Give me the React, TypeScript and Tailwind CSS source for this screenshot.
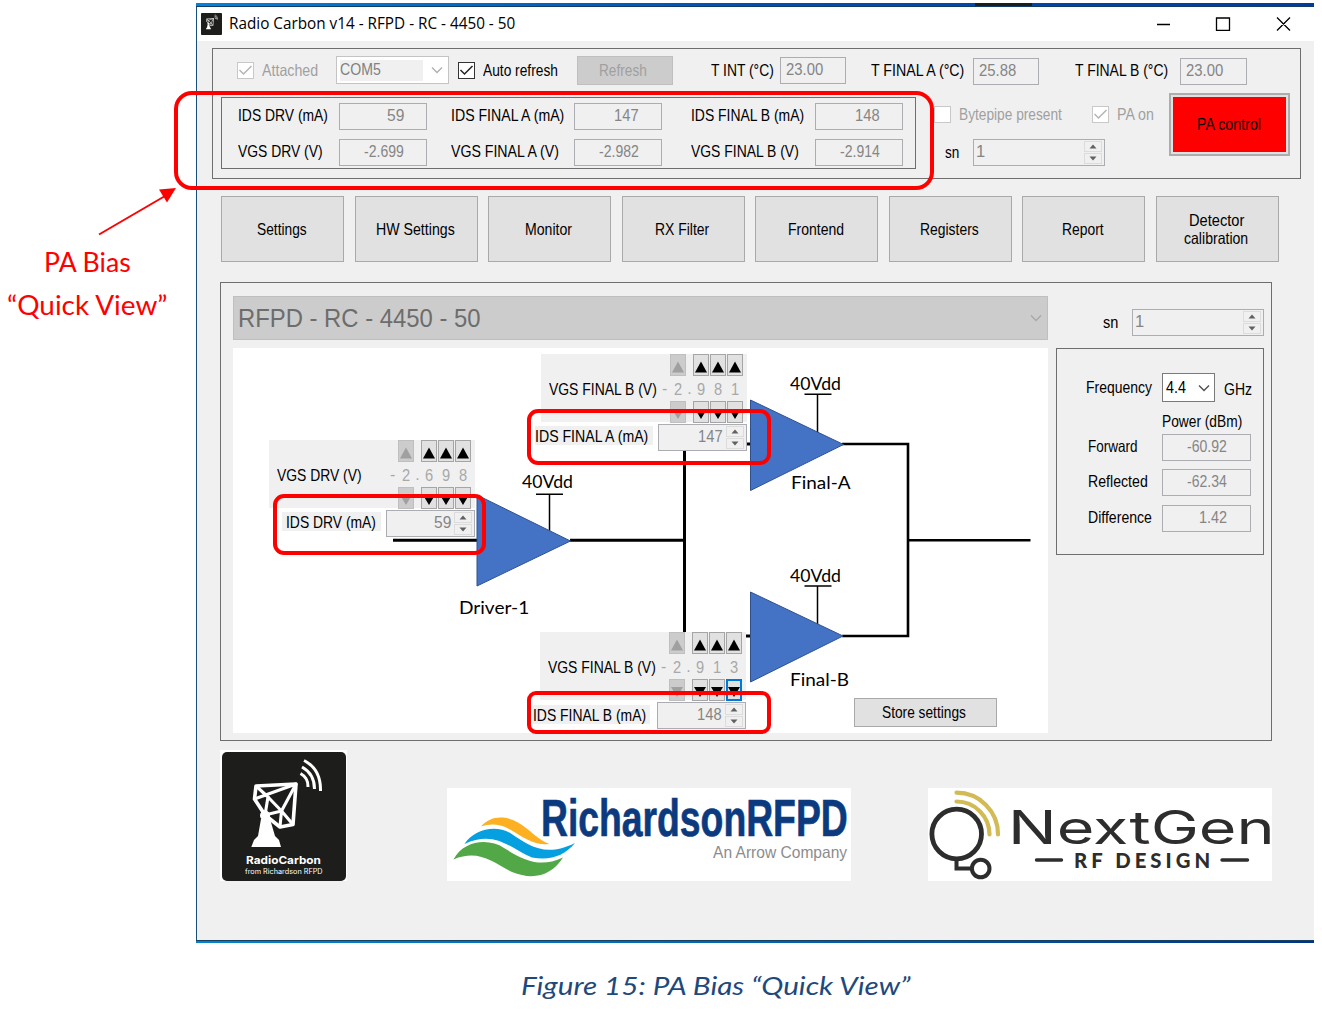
import { useLayoutEffect, useRef } from "react";
import type { ReactNode } from "react";

/* Text condensed or stretched horizontally to fill the width given by its class. */
function Fit({ className = "", children }: { className?: string; children: ReactNode }) {
  const outer = useRef<HTMLSpanElement>(null);
  const inner = useRef<HTMLSpanElement>(null);
  useLayoutEffect(() => {
    const o = outer.current;
    const i = inner.current;
    if (o && i && i.offsetWidth > 0) {
      i.style.transform = `scaleX(${o.clientWidth / i.offsetWidth})`;
    }
  }, []);
  return (
    <span ref={outer} className={"block shrink-0 leading-none whitespace-nowrap " + className}>
      <span ref={inner} className="inline-block origin-left align-top">{children}</span>
    </span>
  );
}

function Check({ checked, disabled, className = "" }: { checked?: boolean; disabled?: boolean; className?: string }) {
  return (
    <span className={"flex size-[17px] shrink-0 items-center justify-center border bg-white " + (disabled ? "border-[#c8c8c8] text-[#b4b4b4] " : "border-[#333] text-[#222] ") + className}>
      {checked && (
        <svg viewBox="0 0 15 15" className="size-[15px]" fill="none" stroke="currentColor" strokeWidth="1.5">
          <path d="M1.5 7 L5.5 11 L13.5 3" />
        </svg>
      )}
    </span>
  );
}

function Value({ box, text, children }: { box: string; text: string; children: ReactNode }) {
  return (
    <div className={"flex shrink-0 border border-[#abadb3] bg-[#f0f0f0] pt-[3px] text-[16.5px] text-[#858585] " + box}>
      <Fit className={text}>{children}</Fit>
    </div>
  );
}

function Arrows() {
  return (
    <div className="flex h-[23px] w-[18px] shrink-0 flex-col gap-[1px]">
      <div className="flex flex-1 items-center justify-center border border-[#dcdcdc]">
        <svg viewBox="0 0 8 5" className="h-[5px] w-[8px]" fill="#606060"><path d="M0.5 4.5 L4 0.5 L7.5 4.5Z" /></svg>
      </div>
      <div className="flex flex-1 items-center justify-center border border-[#dcdcdc]">
        <svg viewBox="0 0 8 5" className="h-[5px] w-[8px]" fill="#606060"><path d="M0.5 0.5 L4 4.5 L7.5 0.5Z" /></svg>
      </div>
    </div>
  );
}

function SnSpinner() {
  return (
    <div className="flex h-[27px] w-[132px] shrink-0 justify-between border border-[#abadb3] pt-[1px] pr-[2px] pl-[2px] text-[16.5px] text-[#858585]">
      <span className="mt-[2px] leading-none">1</span>
      <Arrows />
    </div>
  );
}

function Chevron({ className }: { className: string }) {
  return (
    <svg viewBox="0 0 12 8" className={"h-[8px] w-[12px] shrink-0 " + className} fill="none" stroke="currentColor" strokeWidth="1.4">
      <path d="M1 1.5 L6 6.5 L11 1.5" />
    </svg>
  );
}

function NavButton({ children }: { children: ReactNode }) {
  return (
    <button className="flex h-[66px] w-[123px] flex-col items-center justify-center gap-[1px] border border-[#a9a9a9] bg-[#e1e1e1] pr-[2px] text-[16.5px]">
      {children}
    </button>
  );
}

function StepButton({ dir, state }: { dir: "up" | "down"; state: "off" | "on" | "focus" }) {
  const look =
    state === "off"
      ? "w-[16px] border border-[#bfbfbf] bg-[#cccccc] text-[#a0a0a0]"
      : state === "focus"
        ? "w-[16px] border-2 border-[#0078d7] bg-[#e1e1e1] text-black"
        : "w-[16px] border border-[#a5a5a5] bg-[#e1e1e1] text-black";
  return (
    <div className={"flex h-[22px] items-center justify-center overflow-hidden " + look}>
      <svg viewBox="0 0 12 12" className="mt-[3px] h-[12px] w-[12px] shrink-0" fill="currentColor">
        {dir === "up" ? <path d="M0 11.5 L6 0.5 L12 11.5Z" /> : <path d="M0 1 L12 1 L6 11Z" />}
      </svg>
    </div>
  );
}

function Digit({ value, state, down }: { value: string; state: "off" | "on"; down?: "focus" }) {
  return (
    <div className="flex h-[69px] w-[16px] flex-col items-center justify-between">
      <StepButton dir="up" state={state} />
      <Fit className="mt-[2px] w-[8px] text-[16.5px] text-[#a8a8a8]">{value}</Fit>
      <StepButton dir="down" state={down ?? state} />
    </div>
  );
}

function Adjuster({ label, labelWidth, digits, place, focusLast }: { label: string; labelWidth: string; digits: string[]; place: string; focusLast?: boolean }) {
  return (
    <div className={"absolute flex h-[68px] w-[206px] bg-[#f0f0f0] " + place}>
      <div className="flex w-[119px] items-center pt-[3px] pl-[8px] text-[16.5px]">
        <Fit className={labelWidth}>{label}</Fit>
      </div>
      <div className="flex w-[10px] items-center pt-[2px] pl-[2px] text-[16px] text-[#a8a8a8]">-</div>
      <Digit value={digits[0]} state="off" />
      <div className="flex w-[7px] items-center justify-center pt-[2px] text-[16px] text-[#a8a8a8]">.</div>
      <div className="flex gap-[1px]">
        <Digit value={digits[1]} state="on" />
        <Digit value={digits[2]} state="on" />
        <Digit value={digits[3]} state="on" down={focusLast ? "focus" : undefined} />
      </div>
    </div>
  );
}

function IdsSpinner({ place, text, value }: { place: string; text: string; value: string }) {
  return (
    <div className={"absolute flex h-[27px] w-[89px] justify-end gap-[3px] border border-[#abadb3] bg-[#f0f0f0] pt-[1px] pr-[2px] text-[16.5px] text-[#858585] " + place}>
      <Fit className={"mt-[2px] " + text}>{value}</Fit>
      <Arrows />
    </div>
  );
}

function Dish({ className }: { className: string }) {
  return (
    <svg viewBox="222 752 124 129" className={className}>
      <rect x="222" y="752" width="124" height="129" rx="5" fill="#1d1d1b" />
      <g fill="none" stroke="#fff" strokeWidth="3.6" strokeLinejoin="round">
        <path d="M256 786 L296 784 L293 824.5 L280 827 L265 815 L254.500 799 Z" />
        <path d="M254.500 799 L296 784 L281.5 811 L265 815 L268 797 L256 786" strokeWidth="3.1" />
        <path d="M268 797 L281.5 811 L293 824.5 M281.5 811 L280 826.5" strokeWidth="3.1" />
      </g>
      <g fill="none" stroke="#fff" strokeWidth="3">
        <path d="M300.5 773.5 Q308.500 778 308 787" />
        <path d="M302 767 Q314.500 774 314.500 789" />
        <path d="M304 760.500 Q321 769 320.500 791" />
      </g>
      <circle cx="265" cy="815.5" r="5" fill="#fff" />
      <path d="M261 819 L270 819 L275 836 L279 840 L281 847 L251.300 847 L254 840 L258 836Z" fill="#fff" />
    </svg>
  );
}

const BOX = "border border-[#6e6e6e]";

export default function App() {
  return (
    <div className="relative h-[1013px] w-[1322px] overflow-hidden bg-white font-['Liberation_Sans',sans-serif] text-black">
      <div className="pt-[3px] pl-[196px]">
        {/* Application window */}
        <div className="flex h-[940px] w-[1118px] flex-col">
          <div className="flex h-[4px] shrink-0 border-b border-[#123c66] bg-linear-to-r from-[#0082dc] via-[#0050b4] to-[#003ca0]">
            <div className="ml-[779px] h-[3px] w-[57px] bg-[#1d1d1b]" />
          </div>
          <div className="flex h-[933px] flex-col border-l border-[#195078] bg-[#f0f0f0]">
            <div className="flex h-[34px] shrink-0 items-center bg-white pl-[4px] font-['Open_Sans',sans-serif]">
              <Dish className="h-[22px] w-[21px]" />
              <Fit className="ml-[7px] w-[286px] text-[15.5px]">Radio Carbon v14 - RFPD - RC - 4450 - 50</Fit>
              <svg viewBox="0 0 134 14" className="ml-[642px] h-[14px] w-[134px]" fill="none" stroke="#000" strokeWidth="1.3">
                <path d="M0 7.500 H13 M59.500 1 H72.500 V13.500 H59.500Z M120 0.500 L133 13.500 M133 0.500 L120 13.500" />
              </svg>
            </div>

            {/* Status panel */}
            <div className={"mt-[7px] ml-[15px] h-[131px] w-[1089px] shrink-0 " + BOX}>
              <div className="flex h-[42px] items-center pl-[24px] text-[16.5px]">
                <Check checked disabled />
                <Fit className="ml-[8px] w-[56px] text-[#a0a0a0]">Attached</Fit>
                <div className="ml-[18px] flex h-[28px] w-[113px] items-center justify-between border border-[#c4c4c4] bg-white pr-[5px] pl-[3px]">
                  <div className="flex h-[21px] w-[83px] bg-[#f0f0f0] pt-[1px] text-[#808080]">
                    <Fit className="w-[41px]">COM5</Fit>
                  </div>
                  <Chevron className="text-[#b0b0b0]" />
                </div>
                <Check checked className="ml-[9px]" />
                <Fit className="ml-[8px] w-[75px]">Auto refresh</Fit>
                <div className="ml-[19px] flex h-[29px] w-[96px] items-center justify-center border border-[#bfbfbf] bg-[#cccccc] pr-[4px] text-[#a0a0a0]">
                  <Fit className="w-[48px]">Refresh</Fit>
                </div>
                <Fit className="ml-[38px] w-[63px]">T INT (°C)</Fit>
                <Value box="ml-[6px] h-[27px] w-[66px] pl-[5px]" text="w-[37px]">23.00</Value>
                <Fit className="ml-[25px] w-[93px]">T FINAL A (°C)</Fit>
                <Value box="ml-[9px] mt-[2px] h-[27px] w-[66px] pl-[5px]" text="w-[37px]">25.88</Value>
                <Fit className="ml-[36px] w-[93px]">T FINAL B (°C)</Fit>
                <Value box="ml-[12px] mt-[2px] h-[27px] w-[67px] pl-[5px]" text="w-[37px]">23.00</Value>
              </div>
              <div className="flex pt-[2px] pl-[8px] text-[16.5px]">
                <div className={"mt-[4px] flex h-[72px] w-[695px] shrink-0 flex-col gap-[9px] pt-[5px] pl-[16px] " + BOX}>
                  <div className="flex">
                    <Fit className="mt-[4px] w-[90px]">IDS DRV (mA)</Fit>
                    <Value box="ml-[11px] h-[27px] w-[88px] justify-end pr-[22px]" text="w-[17px]">59</Value>
                    <Fit className="mt-[4px] ml-[24px] w-[113px]">IDS FINAL A (mA)</Fit>
                    <Value box="ml-[10px] h-[27px] w-[88px] justify-end pr-[22px]" text="w-[25px]">147</Value>
                    <Fit className="mt-[4px] ml-[29px] w-[113px]">IDS FINAL B (mA)</Fit>
                    <Value box="ml-[11px] h-[27px] w-[88px] justify-end pr-[22px]" text="w-[25px]">148</Value>
                  </div>
                  <div className="flex">
                    <Fit className="mt-[4px] mr-[5px] w-[85px]">VGS DRV (V)</Fit>
                    <Value box="ml-[11px] h-[27px] w-[88px] justify-end pr-[22px]" text="w-[40px]">-2.699</Value>
                    <Fit className="mt-[4px] mr-[5px] ml-[24px] w-[108px]">VGS FINAL A (V)</Fit>
                    <Value box="ml-[10px] h-[27px] w-[88px] justify-end pr-[22px]" text="w-[40px]">-2.982</Value>
                    <Fit className="mt-[4px] mr-[5px] ml-[29px] w-[108px]">VGS FINAL B (V)</Fit>
                    <Value box="ml-[11px] h-[27px] w-[88px] justify-end pr-[22px]" text="w-[40px]">-2.914</Value>
                  </div>
                </div>
                <div className="ml-[18px] w-[221px] shrink-0 pt-[13px]">
                  <div className="flex items-center text-[#a0a0a0]">
                    <Check disabled />
                    <Fit className="ml-[8px] w-[103px]">Bytepipe present</Fit>
                    <Check checked disabled className="ml-[30px]" />
                    <Fit className="ml-[8px] w-[37px]">PA on</Fit>
                  </div>
                  <div className="mt-[16px] flex items-center pl-[11px]">
                    <Fit className="w-[14px]">sn</Fit>
                    <div className="ml-[14px]"><SnSpinner /></div>
                  </div>
                </div>
                <div className="ml-[14px] h-[63px] w-[121px] border-2 border-[#adadad] bg-[#e1e1e1] p-[2px]">
                  <div className="flex h-full items-center justify-center bg-[#ff0000] pr-[2px]">
                    <Fit className="w-[64px]">PA control</Fit>
                  </div>
                </div>
              </div>
            </div>

            <div className="mt-[17px] ml-[24px] flex shrink-0 gap-[10.5px]">
              <NavButton><Fit className="w-[50px]">Settings</Fit></NavButton>
              <NavButton><Fit className="w-[79px]">HW Settings</Fit></NavButton>
              <NavButton><Fit className="w-[47px]">Monitor</Fit></NavButton>
              <NavButton><Fit className="w-[54px]">RX Filter</Fit></NavButton>
              <NavButton><Fit className="w-[56px]">Frontend</Fit></NavButton>
              <NavButton><Fit className="w-[59px]">Registers</Fit></NavButton>
              <NavButton><Fit className="w-[42px]">Report</Fit></NavButton>
              <NavButton>
                <Fit className="w-[55px]">Detector</Fit>
                <Fit className="w-[64px]">calibration</Fit>
              </NavButton>
            </div>

            {/* Bias panel */}
            <div className={"mt-[20px] ml-[23px] flex h-[459px] w-[1052px] shrink-0 gap-[8px] pt-[13px] pl-[12px] " + BOX}>
              <div className="w-[815px] shrink-0">
                <div className="flex h-[44px] items-center justify-between border border-[#bfbfbf] bg-[#cccccc] pr-[5px] pl-[4px] text-[26.5px] text-[#6d6d6d]">
                  <Fit className="w-[243px]">RFPD - RC - 4450 - 50</Fit>
                  <Chevron className="text-[#a8a8a8]" />
                </div>
                {/* Amplifier chain: a free canvas with controls placed over the schematic */}
                <div className="relative mt-[8px] h-[385px] bg-white text-[16.5px]">
                  <svg viewBox="233 348 815 385" className="absolute inset-0 h-[385px] w-[815px]" fill="none" stroke="#000">
                    <g strokeWidth="3">
                      <path d="M393 540.300 H477 M570 540.300 H685 M684.500 440 V636 M745 444 H751 M745 636 H751" />
                      <path d="M842 444 H908 V636 H842 M908 540.300 H1030.500" strokeWidth="2.600" />
                    </g>
                    <g strokeWidth="1.500">
                      <path d="M536 494.300 H563 M549.500 494 V531 M804.500 394.300 H831.500 M817.500 394 V433 M804.500 586 H831.500 M817.500 586 V625" />
                    </g>
                    <g fill="#4472c4" stroke="#2f528f" strokeWidth="1">
                      <path d="M477 495 V586 L570.500 541Z M750.500 400 V490.500 L843.500 444.500Z M750.500 592 V682 L843 636Z" />
                    </g>
                  </svg>
                  <div className="font-['Lato',sans-serif] text-[18px]">
                    <Fit className="absolute top-[26px] left-[557px] w-[51px]">40Vdd</Fit>
                    <Fit className="absolute top-[124px] left-[289px] w-[51px]">40Vdd</Fit>
                    <Fit className="absolute top-[218px] left-[557px] w-[51px]">40Vdd</Fit>
                    <Fit className="absolute top-[125px] left-[558px] w-[60px]">Final-A</Fit>
                    <Fit className="absolute top-[250px] left-[226px] w-[70px]">Driver-1</Fit>
                    <Fit className="absolute top-[322px] left-[557px] w-[59px]">Final-B</Fit>
                  </div>

                  <Adjuster place="top-[92px] left-[36px]" label="VGS DRV (V)" labelWidth="w-[85px]" digits={["2", "6", "9", "8"]} />
                  <Adjuster place="top-[6px] left-[308px]" label="VGS FINAL B (V)" labelWidth="w-[108px]" digits={["2", "9", "8", "1"]} />
                  <Adjuster place="top-[284px] left-[307px]" label="VGS FINAL B (V)" labelWidth="w-[108px]" digits={["2", "9", "1", "3"]} focusLast />

                  <div className="absolute top-[164px] left-[49px] flex h-[19px] w-[99px] items-center bg-[#f0f0f0] pt-[1px] pl-[4px]"><Fit className="w-[90px]">IDS DRV (mA)</Fit></div>
                  <div className="absolute top-[78px] left-[302px] flex h-[19px] w-[118px] items-center bg-[#f0f0f0] pt-[1px]"><Fit className="w-[113px]">IDS FINAL A (mA)</Fit></div>
                  <div className="absolute top-[357px] left-[300px] flex h-[19px] w-[117px] items-center bg-[#f0f0f0] pt-[1px]"><Fit className="w-[113px]">IDS FINAL B (mA)</Fit></div>

                  <IdsSpinner place="top-[162px] left-[153px]" text="w-[17px]" value="59" />
                  <IdsSpinner place="top-[76px] left-[425px]" text="w-[25px]" value="147" />
                  <IdsSpinner place="top-[354px] left-[424px]" text="w-[25px]" value="148" />

                  <button className="absolute top-[350px] left-[621px] flex h-[29px] w-[143px] items-center justify-center border border-[#a9a9a9] bg-[#e1e1e1] pr-[3px]">
                    <Fit className="w-[84px]">Store settings</Fit>
                  </button>
                </div>
              </div>

              <div className="w-[208px] shrink-0 pt-[13px] text-[16.5px]">
                <div className="flex items-center justify-end gap-[14px]">
                  <Fit className="w-[15px]">sn</Fit>
                  <SnSpinner />
                </div>
                <div className={"mt-[12px] h-[207px] pt-[24px] pl-[29px] " + BOX}>
                  <div className="flex items-center">
                    <Fit className="w-[66px]">Frequency</Fit>
                    <div className="ml-[10px] flex h-[29px] w-[53px] items-center justify-between border border-[#7a7a7a] bg-white pr-[4px] pl-[3px]">
                      <Fit className="w-[20px]">4.4</Fit>
                      <Chevron className="text-[#505050]" />
                    </div>
                    <Fit className="mt-[3px] ml-[9px] w-[28px]">GHz</Fit>
                  </div>
                  <Fit className="mt-[11px] ml-[76px] w-[80px]">Power (dBm)</Fit>
                  <div className="mt-[4px] flex flex-col gap-[8.5px]">
                    <div className="flex">
                      <Fit className="mt-[4px] mr-[24px] ml-[2px] w-[50px]">Forward</Fit>
                      <Value box="h-[27px] w-[89px] justify-end pr-[23px]" text="w-[40px]">-60.92</Value>
                    </div>
                    <div className="flex">
                      <Fit className="mt-[4px] mr-[14px] ml-[2px] w-[60px]">Reflected</Fit>
                      <Value box="h-[27px] w-[89px] justify-end pr-[23px]" text="w-[40px]">-62.34</Value>
                    </div>
                    <div className="flex">
                      <Fit className="mt-[4px] mr-[10px] ml-[2px] w-[64px]">Difference</Fit>
                      <Value box="h-[27px] w-[89px] justify-end pr-[23px]" text="w-[28px]">1.42</Value>
                    </div>
                  </div>
                </div>
              </div>
            </div>

            {/* Logos */}
            <div className="mt-[9px] ml-[23px] flex shrink-0 items-end">
              <div className="relative h-[131px] w-[127px] bg-white p-[2px] pb-0">
                <Dish className="h-[129px] w-[124px]" />
                <div className="absolute inset-x-0 top-[105px] flex flex-col items-center text-white">
                  <Fit className="w-[75px] font-['Inter',sans-serif] text-[11px] font-bold">RadioCarbon</Fit>
                  <Fit className="mt-[1.5px] w-[78px] font-['Inter',sans-serif] text-[7px]">from Richardson RFPD</Fit>
                </div>
              </div>
              <div className="relative ml-[100px] h-[93px] w-[404px] bg-white">
                <svg viewBox="447 788 404 93" className="h-[93px] w-[404px]">
                  <path d="M481 826.500 C489 817 503 814 518 822.500 C530 829.500 538 840 549.500 844 C535 846 523 837 510 829.500 C498 823 489 824 481 826.500Z" fill="#fdb022" />
                  <path d="M464.500 844 C474 829 496 824 511 833.500 C528 845 545 858 575 843 C564 856 550 861 532 857.500 C512 850 496 829 464.500 844Z" fill="#069fe0" />
                  <path d="M453.500 859.500 C464 840 489 838 504 848 C522 859 539 869 563 857.500 C552 875 534 881 512 872 C492 862 479 849 453.500 859.500Z" fill="#52a846" />
                </svg>
                <div className="absolute top-[4px] right-[3px] flex flex-col items-end">
                  <Fit className="w-[307px] text-[52px] font-bold text-[#0c3a7e] [-webkit-text-stroke:0.7px_#0c3a7e]">RichardsonRFPD</Fit>
                  <Fit className="mr-[1px] w-[134px] text-[16.5px] text-[#8c8c8c]">An Arrow Company</Fit>
                </div>
              </div>
              <div className="relative ml-[77px] h-[93px] w-[344px] bg-white">
                <svg viewBox="928 788 344 93" className="h-[93px] w-[344px]" fill="none" stroke="#2d2d2d">
                  <circle cx="956.700" cy="834" r="24.800" strokeWidth="4.800" />
                  <path d="M956.500 859 V868.500 H971" strokeWidth="4" />
                  <circle cx="980.700" cy="868.500" r="8.800" strokeWidth="4" />
                  <path d="M956.500 792.700 A41.500 41.500 0 0 1 998 834.500 M956.500 801.500 A33 33 0 0 1 989.500 834.500" stroke="#d2ba55" strokeWidth="4.200" strokeLinecap="round" />
                  <path d="M1036.500 860 H1061.500 M1222 860 H1247.500" strokeWidth="3.400" strokeLinecap="round" />
                </svg>
                <div className="absolute top-[16px] left-[80px] flex flex-col text-[#2d2d2d]">
                  <Fit className="w-[267px] font-['Inter',sans-serif] text-[46px]">NextGen</Fit>
                  <Fit className="ml-[66px] w-[140px] font-['Lato',sans-serif] text-[20px] font-black tracking-[4px]">RF DESIGN</Fit>
                </div>
              </div>
            </div>
          </div>
          <div className="h-[3px] shrink-0 border-t border-[#17415f] bg-linear-to-r from-[#0082d2] via-[#0064b4] to-[#003290]" />
        </div>
      </div>

      <Fit className="mt-[29px] ml-[521px] w-[390px] font-['Lato',sans-serif] text-[26px] text-[#1f497d] italic">Figure 15: PA Bias “Quick View”</Fit>

      {/* Callouts drawn over the window */}
      <div className="absolute top-[91px] left-[174px] h-[99px] w-[760px] rounded-[18px] border-4 border-[#ff0000]" />
      <div className="absolute top-[409px] left-[527px] h-[56px] w-[244px] rounded-[11px] border-4 border-[#ff0000]" />
      <div className="absolute top-[494px] left-[273px] h-[61px] w-[213px] rounded-[11px] border-4 border-[#ff0000]" />
      <div className="absolute top-[691px] left-[527px] h-[43px] w-[244px] rounded-[9px] border-4 border-[#ff0000]" />
      <svg viewBox="95 185 85 55" className="absolute top-[185px] left-[95px] h-[55px] w-[85px]">
        <path d="M99 234.500 L165 196" stroke="#ff0000" strokeWidth="2" />
        <path d="M176 188 L159 189.500 L167 202.500Z" fill="#ff0000" />
      </svg>
      <div className="absolute top-[249px] left-[7px] flex w-[161px] flex-col items-center gap-[17px] font-['Lato',sans-serif] text-[26px] text-[#ff0000]">
        <Fit className="w-[87px]">PA Bias</Fit>
        <Fit className="w-[161px]">“Quick View”</Fit>
      </div>
    </div>
  );
}
